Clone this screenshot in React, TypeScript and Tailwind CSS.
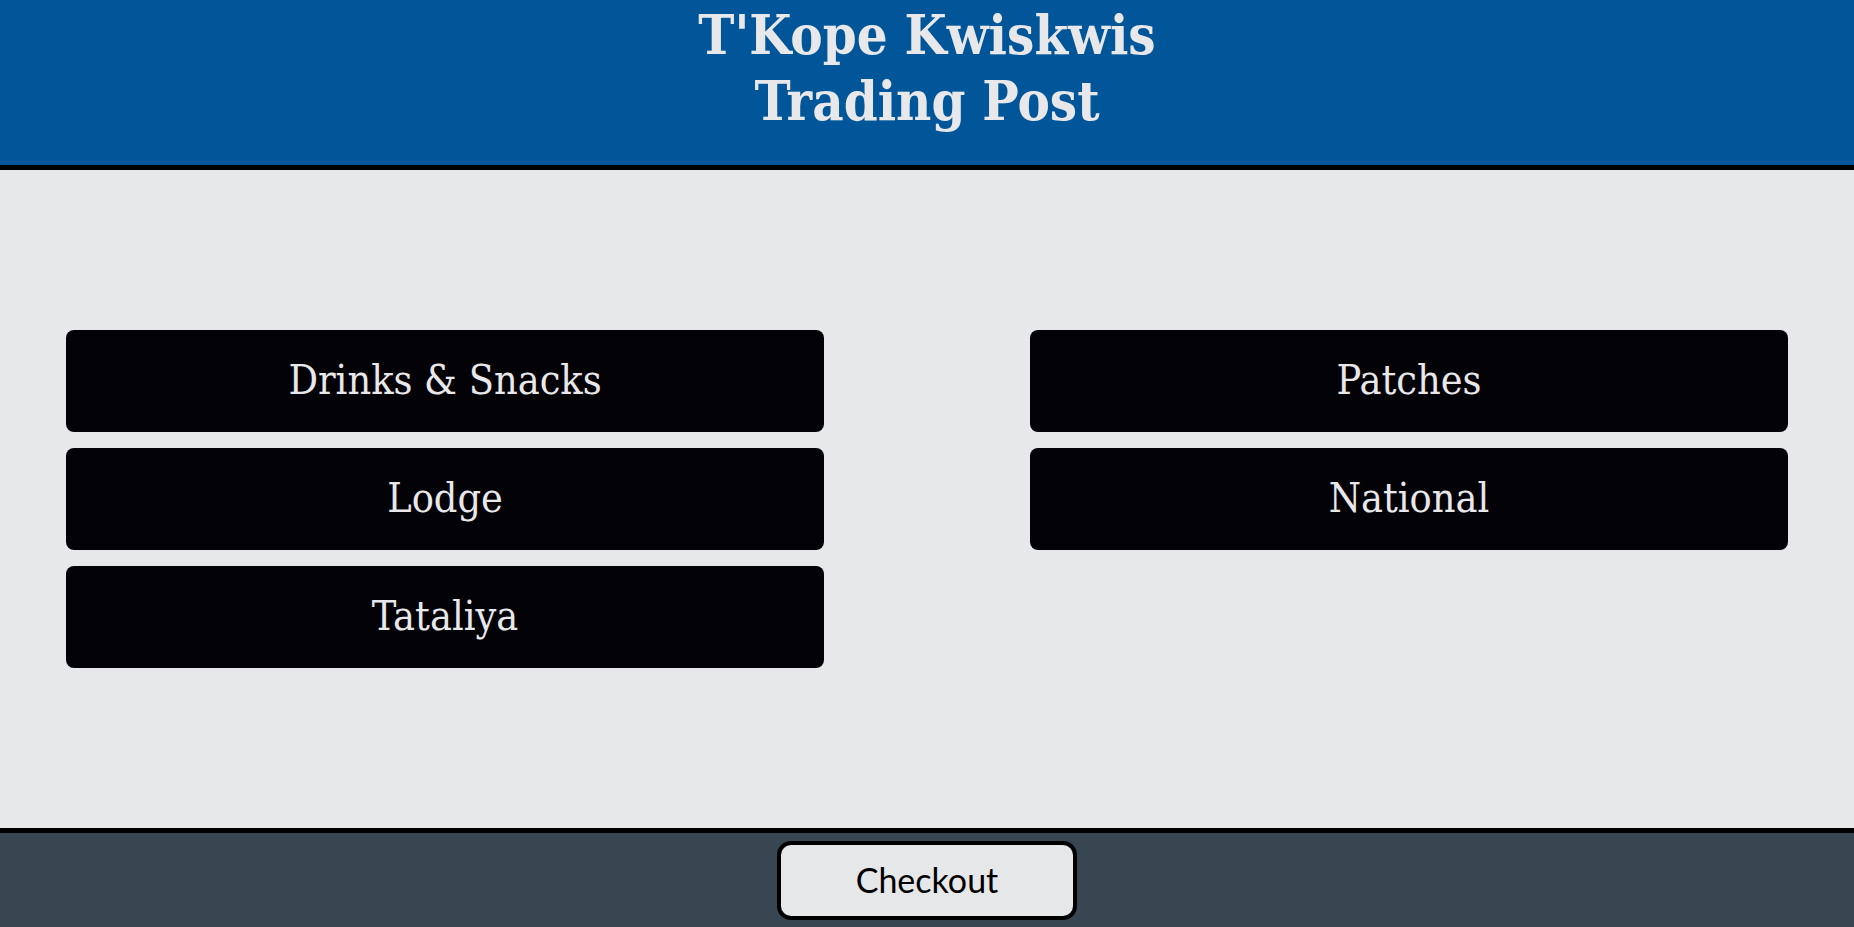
import React from "react";

const items = ["Drinks & Snacks", "Patches", "Lodge", "National", "Tataliya"];

export default function App() {
  return (
    <div className="flex h-screen w-full flex-col bg-[#e7e8ea]">
      <header className="flex h-[170px] shrink-0 items-start justify-center border-b-[5px] border-black bg-[#005699]">
        <h1
          className="mt-[2px] text-center text-[54px] font-bold leading-[66px] text-[#e8e8ea] [font-stretch:condensed]"
          style={{ fontFamily: '"DejaVu Serif Condensed", "DejaVu Serif", serif' }}
        >
          T'Kope Kwiskwis
          <br />
          Trading Post
        </h1>
      </header>
      <main className="flex flex-1 items-center px-[66px]">
        <div className="grid w-full grid-cols-2 gap-x-[206px] gap-y-4">
          {items.map((it) => (
            <button
              key={it}
              className="flex h-[102px] items-center justify-center rounded-lg bg-[#030207] text-[41px] text-[#e8e8ea] [font-stretch:condensed]"
              style={{ fontFamily: '"DejaVu Serif Condensed", "DejaVu Serif", serif' }}
            >
              {it}
            </button>
          ))}
        </div>
      </main>
      <footer className="flex h-[99px] shrink-0 items-center justify-center border-t-[5px] border-black bg-[#384652]">
        <button
          className="flex h-[79px] w-[300px] items-center justify-center rounded-[14px] border-4 border-black bg-[#e6e7e9] pb-[2px] text-[34px] text-black"
          style={{ fontFamily: 'Lato, "Noto Sans", sans-serif' }}
        >
          Checkout
        </button>
      </footer>
    </div>
  );
}
